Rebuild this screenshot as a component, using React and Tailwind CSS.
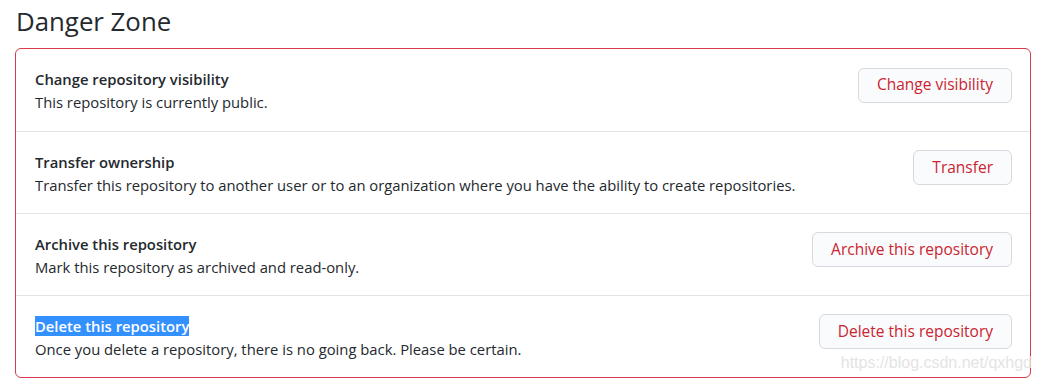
import React from 'react';

const rows = [
  {
    title: 'Change repository visibility',
    desc: 'This repository is currently public.',
    action: 'Change visibility',
  },
  {
    title: 'Transfer ownership',
    desc: 'Transfer this repository to another user or to an organization where you have the ability to create repositories.',
    action: 'Transfer',
  },
  {
    title: 'Archive this repository',
    desc: 'Mark this repository as archived and read-only.',
    action: 'Archive this repository',
  },
  {
    title: 'Delete this repository',
    desc: 'Once you delete a repository, there is no going back. Please be certain.',
    action: 'Delete this repository',
    selected: true,
  },
];

const App = () => {
  return (
    <div className="w-[1043px] h-[386px] bg-white text-[#24292e] font-['Open_Sans','Liberation_Sans',sans-serif] pl-[15px] pr-[12px] pt-[5px]">
      <h2 className="text-[25.8px] leading-[32px] font-normal pl-[1px] mb-[11px]">Danger Zone</h2>
      <div className="relative border border-[#d73a49] rounded-[6px]">
        {rows.map((row, i) => (
          <div
            key={row.title}
            className={`flex items-center justify-between h-[82px] pl-[19px] pr-[18px] ${i > 0 ? 'border-t border-[#e1e4e8]' : ''}`}
          >
            <div className="flex flex-col text-[14.8px] leading-[23px] mt-[2px]">
              <div className="font-semibold">
                <span className={row.selected ? 'bg-[#3390ff] text-white' : ''}>{row.title}</span>
              </div>
              <div>{row.desc}</div>
            </div>
            <button className="h-[35px] px-[18px] rounded-[6px] border border-[#d6d9dd] bg-[#fafbfc] text-[#cb2431] text-[15.5px] mt-[-10px]">
              {row.action}
            </button>
          </div>
        ))}
        <div className="absolute right-[-2px] bottom-[2px] text-[16px] text-[#e4e4e4] font-['Liberation_Sans',sans-serif] pointer-events-none">
          https://blog.csdn.net/qxhgd
        </div>
      </div>
    </div>
  );
};

export default App;
